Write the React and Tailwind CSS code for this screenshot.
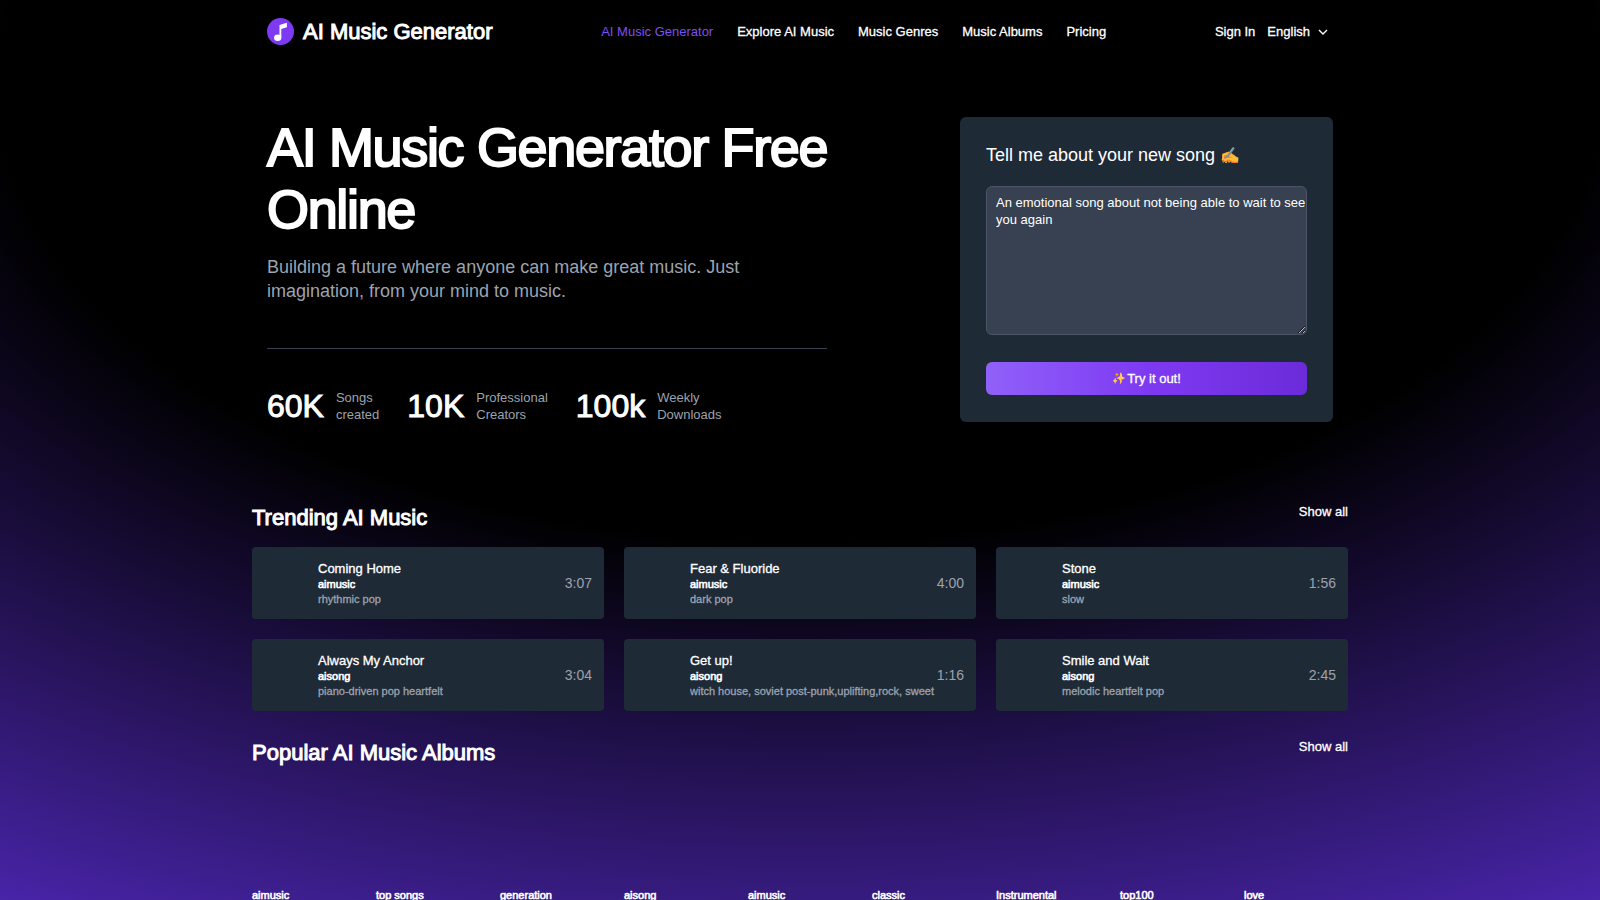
import React from "react";

const NAV = ["Explore AI Music", "Music Genres", "Music Albums", "Pricing"];

const STATS = [
  { value: "60K", label: ["Songs", "created"] },
  { value: "10K", label: ["Professional", "Creators"] },
  { value: "100k", label: ["Weekly", "Downloads"] },
];

const TRACKS = [
  { title: "Coming Home", artist: "aimusic", style: "rhythmic pop", time: "3:07" },
  { title: "Fear & Fluoride", artist: "aimusic", style: "dark pop", time: "4:00" },
  { title: "Stone", artist: "aimusic", style: "slow", time: "1:56" },
  { title: "Always My Anchor", artist: "aisong", style: "piano-driven pop heartfelt", time: "3:04" },
  { title: "Get up!", artist: "aisong", style: "witch house, soviet post-punk,uplifting,rock, sweet", time: "1:16" },
  { title: "Smile and Wait", artist: "aisong", style: "melodic heartfelt pop", time: "2:45" },
];

const ALBUMS = ["aimusic", "top songs", "generation", "aisong", "aimusic", "classic", "Instrumental", "top100", "love"];

function Logo() {
  return (
    <svg viewBox="0 0 27 27" className="size-[27px]" aria-hidden="true">
      <circle cx="13.5" cy="13.5" r="13.5" fill="#7e3af2" />
      <ellipse cx="10.7" cy="19.8" rx="3.6" ry="3.3" fill="#fff" />
      <path d="M12.5 20V7.1l7.4-2.3v4.4l-5.6 1.7V20z" fill="#fff" />
    </svg>
  );
}

function SectionHead({ title }) {
  return (
    <div className="flex items-start justify-between">
      <h2 className="pt-[3px] text-[22px] leading-[32px] [-webkit-text-stroke:1px_#fff]">{title}</h2>
      <a href="#all" className="text-[13px] leading-[26px] [-webkit-text-stroke:0.3px_#fff]">Show all</a>
    </div>
  );
}

function Track({ title, artist, style, time }) {
  return (
    <li className="flex h-[72px] items-center rounded bg-[#1f2a37] pr-3 pl-[66px]">
      <div className="min-w-0 flex-1">
        <h3 className="text-[13px] leading-[17px] [-webkit-text-stroke:0.3px_#fff]">{title}</h3>
        <p className="text-[11px] leading-[15px] [-webkit-text-stroke:0.6px_#fff]">{artist}</p>
        <p className="truncate text-[11px] leading-[15px] text-[#9ca3af] [-webkit-text-stroke:0.3px_#9ca3af]">{style}</p>
      </div>
      <span className="text-sm text-[#9ca3af]">{time}</span>
    </li>
  );
}

export default function App() {
  return (
    <div className="h-screen overflow-hidden bg-[radial-gradient(125%_125%_at_50%_10%,#000_40%,#6633ee_100%)] font-['Liberation_Sans',Arial,sans-serif] text-white">
      <div className="mx-auto max-w-[1096px]">
        <header className="flex h-[63px] items-center justify-between pr-5 pl-[15px]">
          <a href="#home" className="flex items-center gap-[9px]">
            <Logo />
            <span className="text-[22px] [-webkit-text-stroke:1px_#fff]">AI Music Generator</span>
          </a>
          <nav className="flex items-center gap-6 text-[13px]">
            <a href="#generator" className="text-[#7e4ff2]">AI Music Generator</a>
            {NAV.map((n) => (
              <a key={n} href="#nav" className="[-webkit-text-stroke:0.3px_#fff]">{n}</a>
            ))}
          </nav>
          <div className="flex items-center gap-3 text-[13px] [-webkit-text-stroke:0.3px_#fff]">
            <a href="#signin">Sign In</a>
            <button type="button" className="flex items-center gap-2">
              English
              <svg viewBox="0 0 10 10" className="size-[10px]" fill="none" stroke="currentColor" strokeWidth="1.4" aria-hidden="true">
                <path d="M1 3l4 4 4-4" />
              </svg>
            </button>
          </div>
        </header>

        <main>
          <section className="flex items-start justify-between px-[15px] pt-[54px]">
            <div className="w-[560px]">
              <h1 className="-mt-px -mr-2 text-[54px] leading-[62px] tracking-tight [-webkit-text-stroke:2px_#fff]">AI Music Generator Free Online</h1>
              <p className="mt-[15px] max-w-[500px] text-lg leading-[24px] text-[#9ca3af]">
                Building a future where anyone can make great music. Just imagination, from your mind to music.
              </p>
              <hr className="mt-[45px] border-[#374151]" />
              <ul className="mt-10 flex gap-7">
                {STATS.map((s) => (
                  <li key={s.value} className="flex items-center gap-3">
                    <span className="text-[32px] leading-[34px] [-webkit-text-stroke:1px_#fff]">{s.value}</span>
                    <span className="text-[13px] leading-[17px] text-[#9ca3af]">{s.label[0]}<br />{s.label[1]}</span>
                  </li>
                ))}
              </ul>
            </div>

            <form className="w-[373px] rounded-md bg-[#1f2a37] px-[26px] pt-[26px] pb-[27px]">
              <label htmlFor="prompt" className="block text-lg leading-[25px]">
                Tell me about your new song <span className="text-[16px] [filter:hue-rotate(-14deg)]">✍️</span>
              </label>
              <textarea
                id="prompt"
                className="mt-[18px] block h-[149px] w-full rounded-md border border-[#4b5563] bg-[#374151] py-[7px] pr-0 pl-[9px] text-[13px] leading-[17px]"
                defaultValue="An emotional song about not being able to wait to see you again"
              />
              <button type="button" className="mt-[27px] flex h-[33px] w-full items-center justify-center gap-px rounded-md bg-linear-to-r/srgb from-[#9061f9] via-[#7e3af2] to-[#6c2bd9] text-[13px] [-webkit-text-stroke:0.3px_#fff]">
                <span className="text-[11px] [filter:hue-rotate(-14deg)]">✨</span>Try it out!
              </button>
            </form>
          </section>

          <section className="pt-[76px]">
            <SectionHead title="Trending AI Music" />
            <ul className="mt-[13px] grid grid-cols-3 gap-5">
              {TRACKS.map((t) => (
                <Track key={t.title} {...t} />
              ))}
            </ul>
          </section>

          <section className="pt-[23px]">
            <SectionHead title="Popular AI Music Albums" />
            <ul className="mt-[119px] grid grid-cols-9 gap-5">
              {ALBUMS.map((a, i) => (
                <li key={i} className="text-[11px] leading-[15px] [-webkit-text-stroke:0.6px_#fff]">{a}</li>
              ))}
            </ul>
          </section>
        </main>
      </div>
    </div>
  );
}
